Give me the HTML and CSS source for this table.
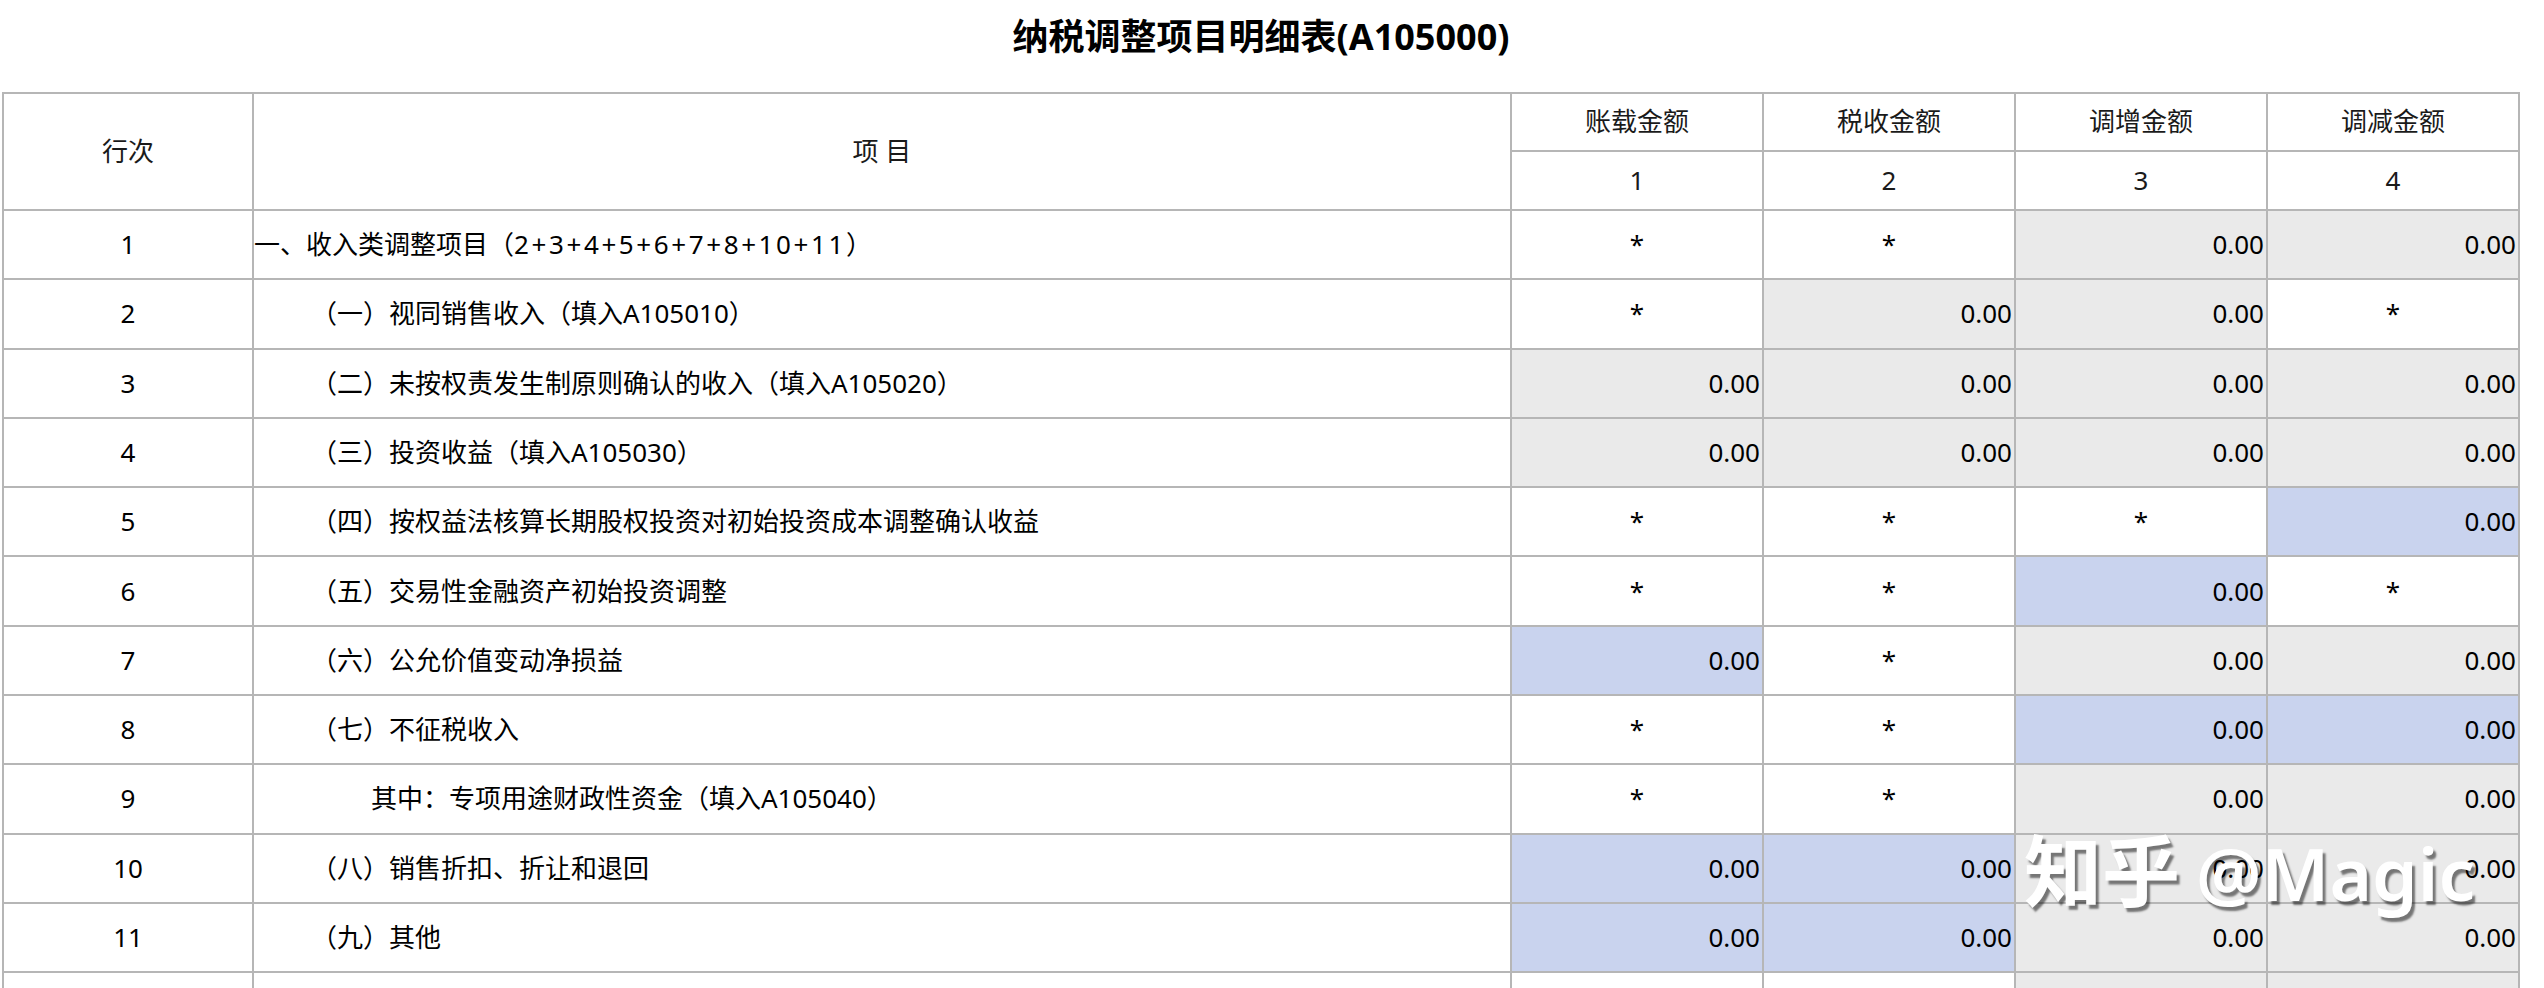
FILE: index.html
```html
<!DOCTYPE html>
<html lang="zh-CN">
<head>
<meta charset="utf-8">
<title>纳税调整项目明细表(A105000)</title>
<link rel="stylesheet" href="styles.css">
</head>
<body>
<div class="page">
  <h1 class="title">纳税调整项目明细表(A105000)</h1>
  <div class="sheet">
    <div class="c hd center span2">行次</div>
    <div class="c hd center span2">项 目</div>
    <div class="c hd center">账载金额</div>
    <div class="c hd center">税收金额</div>
    <div class="c hd center">调增金额</div>
    <div class="c hd center">调减金额</div>
    <div class="c hd center">1</div>
    <div class="c hd center">2</div>
    <div class="c hd center">3</div>
    <div class="c hd center">4</div>

    <div class="c center">1</div>
    <div class="c item">一、收入类调整项目（<span class="formula">2+3+4+5+6+7+8+10+11</span>）</div>
    <div class="c center">*</div>
    <div class="c center">*</div>
    <div class="c num gray">0.00</div>
    <div class="c num gray">0.00</div>

    <div class="c center">2</div>
    <div class="c item ind1">（一）视同销售收入（填入A105010）</div>
    <div class="c center">*</div>
    <div class="c num gray">0.00</div>
    <div class="c num gray">0.00</div>
    <div class="c center">*</div>

    <div class="c center">3</div>
    <div class="c item ind1">（二）未按权责发生制原则确认的收入（填入A105020）</div>
    <div class="c num gray">0.00</div>
    <div class="c num gray">0.00</div>
    <div class="c num gray">0.00</div>
    <div class="c num gray">0.00</div>

    <div class="c center">4</div>
    <div class="c item ind1">（三）投资收益（填入A105030）</div>
    <div class="c num gray">0.00</div>
    <div class="c num gray">0.00</div>
    <div class="c num gray">0.00</div>
    <div class="c num gray">0.00</div>

    <div class="c center">5</div>
    <div class="c item ind1">（四）按权益法核算长期股权投资对初始投资成本调整确认收益</div>
    <div class="c center">*</div>
    <div class="c center">*</div>
    <div class="c center">*</div>
    <div class="c num blue">0.00</div>

    <div class="c center">6</div>
    <div class="c item ind1">（五）交易性金融资产初始投资调整</div>
    <div class="c center">*</div>
    <div class="c center">*</div>
    <div class="c num blue">0.00</div>
    <div class="c center">*</div>

    <div class="c center">7</div>
    <div class="c item ind1">（六）公允价值变动净损益</div>
    <div class="c num blue">0.00</div>
    <div class="c center">*</div>
    <div class="c num gray">0.00</div>
    <div class="c num gray">0.00</div>

    <div class="c center">8</div>
    <div class="c item ind1">（七）不征税收入</div>
    <div class="c center">*</div>
    <div class="c center">*</div>
    <div class="c num blue">0.00</div>
    <div class="c num blue">0.00</div>

    <div class="c center">9</div>
    <div class="c item ind2">其中：专项用途财政性资金（填入A105040）</div>
    <div class="c center">*</div>
    <div class="c center">*</div>
    <div class="c num gray">0.00</div>
    <div class="c num gray">0.00</div>

    <div class="c center">10</div>
    <div class="c item ind1">（八）销售折扣、折让和退回</div>
    <div class="c num blue">0.00</div>
    <div class="c num blue">0.00</div>
    <div class="c num gray">0.00</div>
    <div class="c num gray">0.00</div>

    <div class="c center">11</div>
    <div class="c item ind1">（九）其他</div>
    <div class="c num blue">0.00</div>
    <div class="c num blue">0.00</div>
    <div class="c num gray">0.00</div>
    <div class="c num gray">0.00</div>

    <div class="c"></div>
    <div class="c"></div>
    <div class="c"></div>
    <div class="c"></div>
    <div class="c gray"></div>
    <div class="c gray"></div>
  </div>
  <div class="wm"><span class="wm-cn">知乎</span><span class="wm-en">@Magic</span></div>
</div>
</body>
</html>
```

FILE: styles.css
```css
html, body {
  margin: 0;
  padding: 0;
  background: #ffffff;
}

body {
  font-family: "Noto Sans", "Noto Sans CJK SC", sans-serif;
  color: #000000;
}

.page {
  position: relative;
  padding-left: 2px;
}

.title {
  width: 2518px;
  height: 74px;
  margin: 0 0 18px 0;
  font-size: 36px;
  line-height: 74px;
  font-weight: 700;
  text-align: center;
  color: #000;
}

.sheet {
  display: grid;
  width: 2518px;
  box-sizing: border-box;
  grid-template-columns: 248px 1256px 250px 250px 250px 250px;
  grid-template-rows: 56px 57px repeat(12, 67.3px);
  gap: 2px;
  padding: 2px;
  background: #b6b6b6;
}

.c {
  display: flex;
  align-items: center;
  background: #ffffff;
  font-size: 26px;
  line-height: 1.2;
  white-space: nowrap;
  overflow: hidden;
}

.span2 {
  grid-row: span 2;
}

.center {
  justify-content: center;
}

.num {
  justify-content: flex-end;
  padding-right: 2px;
}

.item {
  padding-left: 0;
}

.ind1 {
  padding-left: 57px;
}

.ind2 {
  padding-left: 117px;
}

.formula {
  letter-spacing: 2.6px;
}

.gray {
  background: #eaeaea;
}

.blue {
  background: #c9d3ee;
}

.hd {
  color: #1a1a1a;
}

.wm {
  position: absolute;
  left: 2024px;
  top: 822px;
  line-height: 90px;
  color: #ffffff;
  text-shadow: 3px 4px 2px rgba(0, 0, 0, 0.5);
  white-space: nowrap;
}

.wm-cn {
  font-family: "Noto Sans CJK SC", sans-serif;
  font-size: 78px;
  font-weight: 700;
}

.wm-en {
  font-family: "Noto Sans", sans-serif;
  font-size: 73px;
  font-weight: 600;
  letter-spacing: 0;
  margin-left: 16px;
}
```
